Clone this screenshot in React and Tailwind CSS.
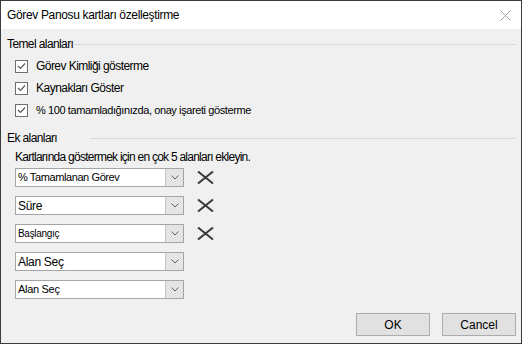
import React from 'react';

const fields = [
  { label: '% Tamamlanan Görev', size: 'text-[11px] tracking-[-0.4px]', removable: true },
  { label: 'Süre', size: 'text-[12px] tracking-[-0.3px]', removable: true },
  { label: 'Başlangıç', size: 'text-[10px] tracking-[-0.3px]', removable: true },
  { label: 'Alan Seç', size: 'text-[12px] tracking-[-0.3px]', removable: false },
  { label: 'Alan Seç', size: 'text-[11px] tracking-[-0.3px]', removable: false },
];

const options = [
  { label: 'Görev Kimliği gösterme', size: 'text-[12px] tracking-[-0.55px]' },
  { label: 'Kaynakları Göster', size: 'text-[12px] tracking-[-0.5px]' },
  { label: '% 100 tamamladığınızda, onay işareti gösterme', size: 'text-[11px] tracking-[-0.4px]' },
];

const CheckBox = () => (
  <span className="w-[13px] h-[13px] border border-[#6e6e6e] bg-white flex items-center justify-center shrink-0">
    <svg width="9" height="8" viewBox="0 0 9 8" fill="none">
      <path d="M1 4 L3.5 6.5 L8 1.5" stroke="#5a5a5a" strokeWidth="1.2" />
    </svg>
  </span>
);

const GroupHeading = ({ title, lineGap }) => (
  <div className="h-[16px] flex items-center">
    <span className="leading-none tracking-[-0.6px]">{title}</span>
    <span className={`flex-1 h-px bg-[#d9d9d9] ${lineGap}`} />
  </div>
);

const FieldSelect = ({ label, size }) => (
  <div className="w-[169px] h-[19px] border border-[#a5a5a5] bg-white flex">
    <span className={`flex-1 flex items-center pl-[2px] leading-none ${size}`}>{label}</span>
    <span className="w-[18px] h-full bg-[#e5e5e5] border-l border-[#c4c4c4] flex items-center justify-center">
      <svg width="8" height="5" viewBox="0 0 8 5" fill="none">
        <path d="M0.5 0.5 L4 4 L7.5 0.5" stroke="#606060" strokeWidth="1" />
      </svg>
    </span>
  </div>
);

const RemoveIcon = () => (
  <svg width="17" height="13" viewBox="0 0 17 13" fill="none">
    <path d="M1 0.5 L16 12.5 M16 0.5 L1 12.5" stroke="#3a3a3a" strokeWidth="2" />
  </svg>
);

export default function App() {
  return (
    <div className="w-[522px] h-[344px] border border-[#3c3c3c] bg-[#f0f0f0] flex flex-col text-[12px] text-black font-['Liberation_Sans',Arial,sans-serif]">
      {/* title bar */}
      <div className="h-[28px] bg-white flex items-center justify-between pl-[6px] pr-[10px]">
        <span className="leading-none tracking-[-0.35px]">Görev Panosu kartları özelleştirme</span>
        <svg width="11" height="11" viewBox="0 0 11 11" fill="none">
          <path d="M0.5 0.5 L10.5 10.5 M10.5 0.5 L0.5 10.5" stroke="#a0a0a0" strokeWidth="1" />
        </svg>
      </div>

      <div className="flex-1 flex flex-col pl-[6px] pr-[5px]">
        <div className="mt-[7px]">
          <GroupHeading title="Temel alanları" lineGap="ml-[1px]" />
        </div>
        <div className="mt-[3px] pl-[8px] flex flex-col">
          {options.map((o) => (
            <div key={o.label} className="h-[22px] flex items-center gap-[8px]">
              <CheckBox />
              <span className={`leading-none ${o.size}`}>{o.label}</span>
            </div>
          ))}
        </div>

        <div className="mt-[9px]">
          <GroupHeading title="Ek alanları" lineGap="ml-[33px]" />
        </div>
        <div className="mt-[3px] pl-[8px] h-[16px] flex items-center leading-none tracking-[-0.75px]">
          Kartlarında göstermek için en çok 5 alanları ekleyin.
        </div>

        <div className="mt-[3px] pl-[8px] flex flex-col gap-[9px]">
          {fields.map((f, i) => (
            <div key={i} className="flex items-center gap-[13px]">
              <FieldSelect label={f.label} size={f.size} />
              {f.removable && <RemoveIcon />}
            </div>
          ))}
        </div>

        <div className="mt-auto mb-[7px] flex justify-end gap-[12px]">
          <button className="w-[74px] h-[23px] bg-[#e1e1e1] border border-[#adadad] text-[12px] leading-none">OK</button>
          <button className="w-[74px] h-[23px] bg-[#e1e1e1] border border-[#adadad] text-[12px] leading-none">Cancel</button>
        </div>
      </div>
    </div>
  );
}
